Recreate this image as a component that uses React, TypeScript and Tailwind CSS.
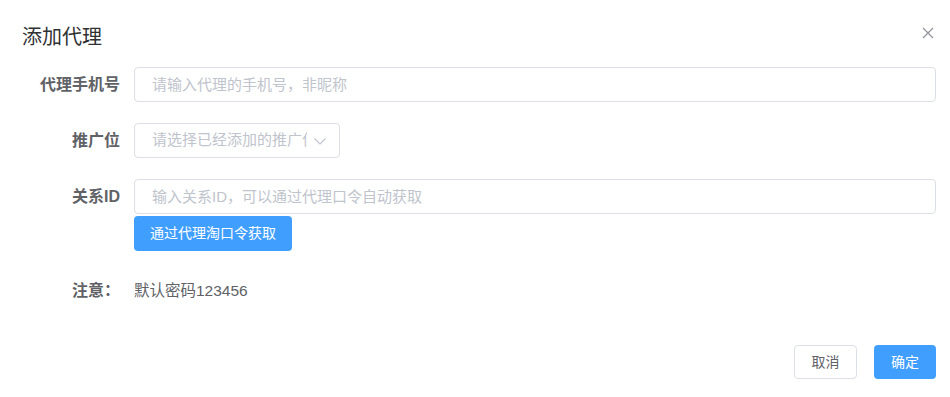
import React from 'react';

const font = { fontFamily: '"Liberation Sans", "Noto Sans CJK SC", sans-serif' };

function FormRow({ label, children, align = 'center' }: { label: string; children: React.ReactNode; align?: 'center' | 'start' }) {
  return (
    <div className={`flex ${align === 'center' ? 'items-center' : 'items-start'}`}>
      <div
        className={`w-[134px] shrink-0 pr-[14px] text-right text-[16px] font-bold text-[#606266] ${
          align === 'start' ? 'h-[35px] leading-[35px]' : ''
        }`}
      >
        {label}
      </div>
      <div className="flex-1 min-w-0">{children}</div>
    </div>
  );
}

export default function App() {
  return (
    <div className="w-[950px] h-[397px] bg-white relative" style={font}>
      {/* Header */}
      <div className="pt-[24px] pl-[22px] h-[67px]">
        <span className="text-[20px] leading-[26px] text-[#303133]">添加代理</span>
      </div>
      <button className="absolute top-[27px] right-[16px] w-[12px] h-[12px] text-[#909399]">
        <svg viewBox="0 0 12 12" width="12" height="12" fill="none" stroke="currentColor" strokeWidth="1.2">
          <path d="M1 1L11 11M11 1L1 11" />
        </svg>
      </button>

      {/* Form */}
      <div className="pr-[14px] flex flex-col">
        <FormRow label="代理手机号">
          <input
            className="w-full h-[35px] border border-[#dcdfe6] rounded-[4px] px-[17px] text-[15px] text-[#606266] placeholder:text-[#c0c4cc] outline-none"
            placeholder="请输入代理的手机号，非昵称"
          />
        </FormRow>

        <div className="mt-[21px]">
          <FormRow label="推广位">
            <div className="w-[206px] h-[35px] border border-[#dcdfe6] rounded-[4px] flex items-center pl-[17px] pr-[12px]">
              <span className="flex-1 min-w-0 overflow-hidden whitespace-nowrap text-[15px] text-[#c0c4cc]">
                请选择已经添加的推广位
              </span>
              <svg viewBox="0 0 14 14" width="14" height="14" className="ml-[6px] shrink-0 text-[#c0c4cc]" fill="none" stroke="currentColor" strokeWidth="1.2">
                <path d="M1.5 4.5L7 10L12.5 4.5" />
              </svg>
            </div>
          </FormRow>
        </div>

        <div className="mt-[21px]">
          <FormRow label="关系ID" align="start">
            <input
              className="w-full h-[35px] border border-[#dcdfe6] rounded-[4px] px-[17px] text-[15px] text-[#606266] placeholder:text-[#c0c4cc] outline-none"
              placeholder="输入关系ID，可以通过代理口令自动获取"
            />
            <button className="mt-[2px] h-[35px] px-[16px] rounded-[4px] bg-[#409eff] text-white text-[14px]">
              通过代理淘口令获取
            </button>
          </FormRow>
        </div>

        <div className="mt-[28px]">
          <FormRow label="注意：">
            <span className="text-[15.5px] text-[#606266]">默认密码123456</span>
          </FormRow>
        </div>
      </div>

      {/* Footer */}
      <div className="absolute right-[14px] top-[345px] flex gap-[17px]">
        <button className="h-[34px] w-[63px] border border-[#dcdfe6] rounded-[4px] bg-white text-[14px] text-[#606266]">
          取消
        </button>
        <button className="h-[34px] w-[62px] rounded-[4px] bg-[#409eff] text-white text-[14px]">确定</button>
      </div>
    </div>
  );
}
